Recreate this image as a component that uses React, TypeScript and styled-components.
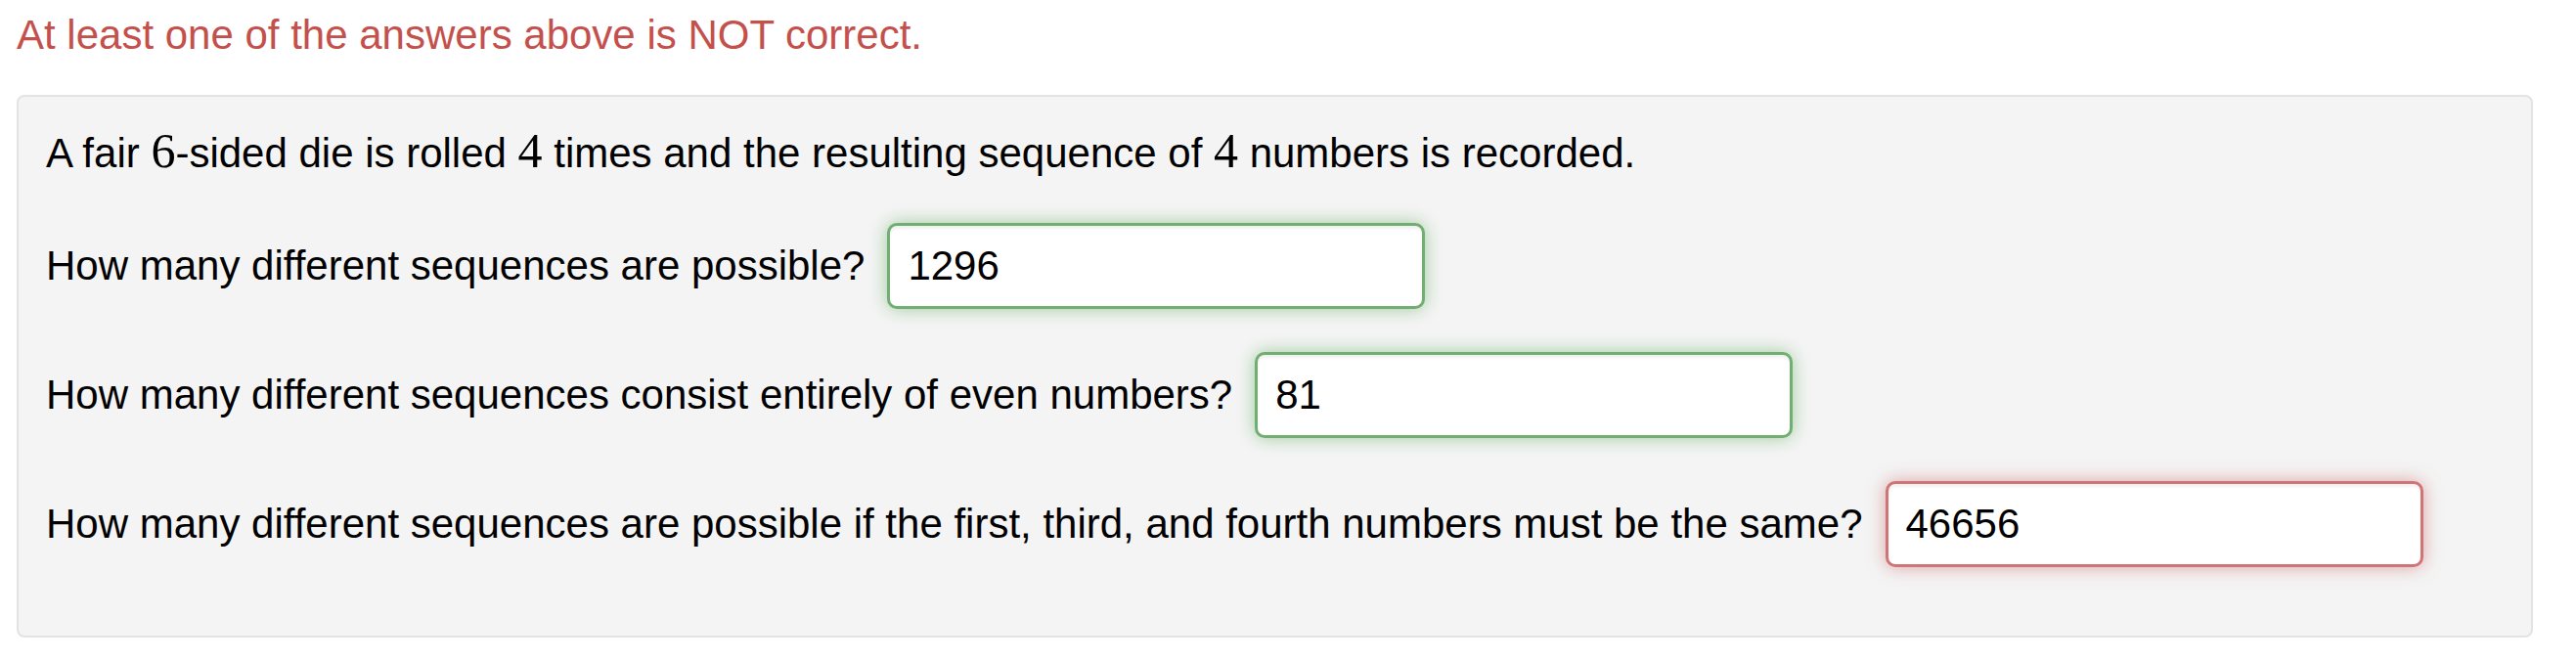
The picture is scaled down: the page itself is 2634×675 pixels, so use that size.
import React from "react";
import styled, { createGlobalStyle, css } from "styled-components";

const GlobalStyle = createGlobalStyle`
  html, body {
    margin: 0;
    padding: 0;
    background: #ffffff;
  }
  body {
    font-family: "Liberation Sans", Arial, sans-serif;
    color: #000000;
  }
`;

type Status = "correct" | "incorrect";

type Question = {
  label: string;
  answer: string;
  status: Status;
};

const questions: Question[] = [
  {
    label: "How many different sequences are possible?",
    answer: "1296",
    status: "correct",
  },
  {
    label: "How many different sequences consist entirely of even numbers?",
    answer: "81",
    status: "correct",
  },
  {
    label:
      "How many different sequences are possible if the first, third, and fourth numbers must be the same?",
    answer: "46656",
    status: "incorrect",
  },
];

const App = () => {
  return (
    <Page>
      <GlobalStyle />
      <Message>At least one of the answers above is NOT correct.</Message>
      <ProblemBox>
        <Statement>
          A fair <MathNum>6</MathNum>-sided die is rolled <MathNum>4</MathNum>{" "}
          times and the resulting sequence of <MathNum>4</MathNum> numbers is
          recorded.
        </Statement>
        <QuestionList>
          {questions.map((q) => (
            <QuestionRow key={q.label}>
              <Label>{q.label}</Label>
              <AnswerInput
                $status={q.status}
                defaultValue={q.answer}
                readOnly
              />
            </QuestionRow>
          ))}
        </QuestionList>
      </ProblemBox>
    </Page>
  );
};

export default App;

const Page = styled.div`
  padding: 11px 44px 0 17px;
`;

const Message = styled.div`
  font-size: 42px;
  line-height: 50px;
  color: #c4504c;
`;

const ProblemBox = styled.div`
  margin-top: 36px;
  width: 2573px;
  box-sizing: border-box;
  height: 555px;
  background: #f4f4f4;
  border: 2px solid #e3e3e3;
  border-radius: 8px;
  padding: 33px 28px 0 28px;
`;

const Statement = styled.div`
  font-size: 42px;
  line-height: 50px;
`;

const MathNum = styled.span`
  font-family: "Liberation Serif", "Times New Roman", serif;
  font-size: 50px;
  line-height: 40px;
`;

const QuestionList = styled.div`
  margin-top: 46px;
  display: flex;
  flex-direction: column;
  gap: 44px;
`;

const QuestionRow = styled.div`
  display: flex;
  align-items: center;
  gap: 23px;
  height: 88px;
`;

const Label = styled.span`
  font-size: 42px;
  line-height: 50px;
  white-space: nowrap;
`;

const AnswerInput = styled.input<{ $status: Status }>`
  box-sizing: border-box;
  width: 550px;
  height: 88px;
  padding: 0 18px;
  font-family: "Liberation Sans", Arial, sans-serif;
  font-size: 42px;
  color: #000000;
  background: #ffffff;
  border-radius: 10px;
  outline: none;
  ${({ $status }) =>
    $status === "correct"
      ? css`
          border: 3px solid #72ad72;
          box-shadow: inset 0 3px 3px rgba(0, 0, 0, 0.06),
            0 0 18px rgba(122, 186, 123, 0.7);
        `
      : css`
          border: 3px solid #d07575;
          box-shadow: inset 0 3px 3px rgba(0, 0, 0, 0.06),
            0 0 18px rgba(211, 120, 120, 0.65);
        `}
`;
